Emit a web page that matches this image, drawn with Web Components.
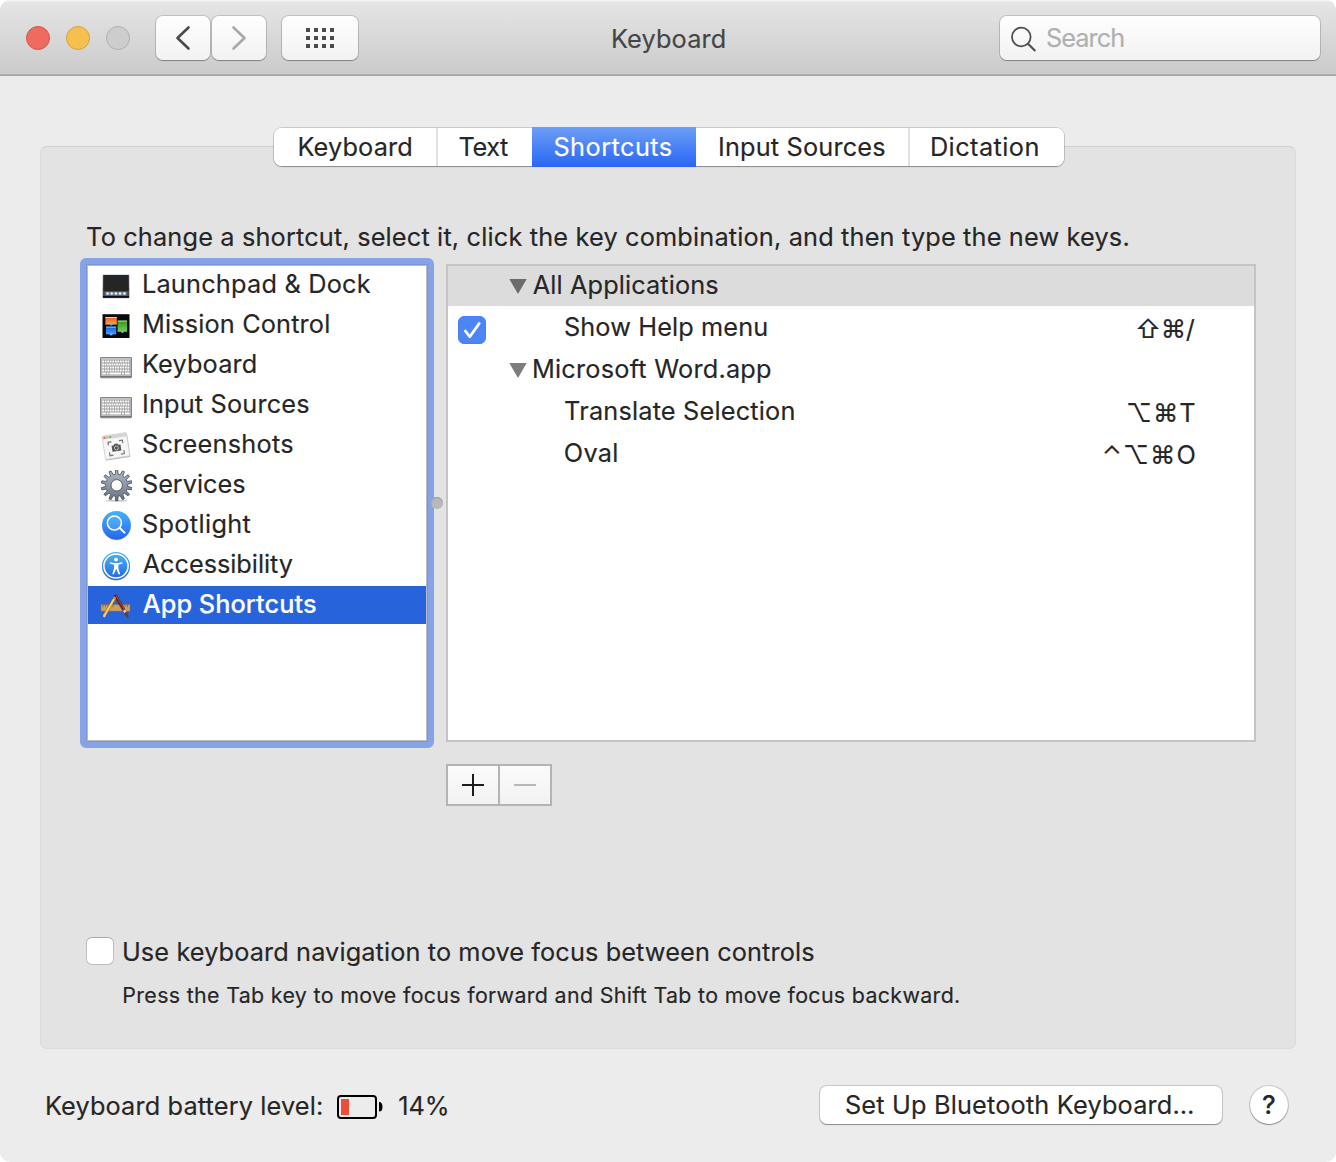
<!DOCTYPE html>
<html lang="en">
<head>
<meta charset="utf-8">
<title>Keyboard</title>
<style>
html{background:#fff}
body{margin:0;width:1336px;height:1162px;overflow:hidden;font-family:Inter,"Liberation Sans",sans-serif;color:#262626}
</style>
</head>
<body>
<pref-window></pref-window>
<script>
const define = (name, html, setup) => {
  const t = document.createElement('template');
  t.innerHTML = html;
  customElements.define(name, class extends HTMLElement {
    connectedCallback() {
      if (this.shadowRoot) return;
      this.attachShadow({mode: 'open'}).append(t.content.cloneNode(true));
      if (setup) setup(this, this.shadowRoot);
    }
  });
};

/* One line of text whose visible ink spans exactly `ink` pixels. */
const ctx = document.createElement('canvas').getContext('2d');
customElements.define('ui-label', class extends HTMLElement {
  connectedCallback() {
    if (this.shadowRoot) return;
    const size = this.getAttribute('size') || 25.3;
    const weight = this.getAttribute('weight') || 400;
    const ink = +this.getAttribute('ink');
    const root = this.attachShadow({mode: 'open'});
    root.innerHTML = `<style>:host{display:block;flex:none;width:${ink}px;height:30px;line-height:30px;font-size:${size}px;font-weight:${weight};white-space:pre}span{display:inline-block;font-kerning:normal;font-feature-settings:"calt" 0;-webkit-text-stroke:.15px currentColor}</style><span></span>`;
    const span = root.querySelector('span');
    const text = this.getAttribute('text');
    span.textContent = text;
    /* Measured at ten times the size, since glyph bounds are rounded to whole pixels. */
    ctx.font = `${weight} ${size * 10}px Inter, "Liberation Sans", sans-serif`;
    const m = ctx.measureText(text);
    const left = m.actualBoundingBoxLeft / 10, right = m.actualBoundingBoxRight / 10;
    const air = /^[BDIKLMPU⇧]/.test(text) ? 1.1 : .3;
    const gap = (ink - .6 - air - right - left) / ([...text].length - 1 || 1);
    span.style.letterSpacing = gap.toFixed(3) + 'px';
    span.style.marginLeft = (left + air).toFixed(2) + 'px';
  }
});

const gear = (() => {
  const n = 14, cx = 16.7, cy = 15.3; let d = '';
  for (let i = 0; i < n; i++) {
    const a = i * 2 * Math.PI / n - Math.PI / 2;
    [[-.13, 11], [-.07, 15.5], [.07, 15.5], [.13, 11]].forEach(([o, r], k) => {
      d += (i || k ? 'L' : 'M') + (cx + r * Math.cos(a + o)).toFixed(2) + ' ' + (cy + r * Math.sin(a + o)).toFixed(2);
    });
  }
  return d + 'ZM22.4 15.3a5.7 5.7 0 1 0-11.4 0a5.7 5.7 0 1 0 11.4 0Z';
})();
const keys = (() => {
  let s = '';
  [[10.5, 11, 2.1], [13.5, 12, 2.1], [16.5, 11, 2.1], [19.5, 11, 2.1]].forEach(([y, n, w], r) => {
    for (let i = 0; i < n; i++) s += `<rect x="${(2.2 + i * 27.8 / n).toFixed(2)}" y="${y}" width="${w - .3}" height="2" fill="#fff"/>`;
  });
  return s + '<path d="M2.2 22.6h3.6v2H2.2zM6.6 22.6h2v2h-2zM9.4 22.6h11.8v2H9.4zM22 22.6h2v2h-2zM24.8 22.6h5v2h-5z" fill="#fff"/>';
})();
const icons = {
  launchpad: `<defs><linearGradient id="a" x2="0" y2="1"><stop stop-color="#dbe7f1"/><stop offset="1" stop-color="#333"/></linearGradient></defs>
    <rect x="2.4" y="4" width="27.2" height="24.4" rx="1" fill="#000" opacity=".18"/><rect x="2.8" y="4.2" width="26.4" height="23.5" fill="url(#a)"/><rect x="3.2" y="5" width="25.6" height="16" fill="#252525"/><rect x="3.2" y="21" width="25.6" height="5.6" fill="#4b4f55"/><rect x="5.4" y="22" width="21.4" height="3.4" fill="#6d8096"/>
    <g fill="#eef4fb"><circle cx="7.5" cy="23.6" r="1.25"/><circle cx="11.7" cy="23.6" r="1.25"/><circle cx="15.9" cy="23.6" r="1.25"/><circle cx="20.1" cy="23.6" r="1.25"/><circle cx="24.4" cy="23.6" r="1.25"/></g><rect x="3" y="26.2" width="26" height="1.5" fill="#050505"/>`,
  mission: `<defs><linearGradient id="o" x2="0" y2="1"><stop stop-color="#f05a1a"/><stop offset="1" stop-color="#fba64c"/></linearGradient><linearGradient id="b" x2="0" y2="1"><stop stop-color="#1557d8"/><stop offset="1" stop-color="#42a5f8"/></linearGradient><linearGradient id="g" x2="0" y2="1"><stop stop-color="#2e9426"/><stop offset="1" stop-color="#72d344"/></linearGradient></defs>
    <rect x="2.5" y="4.2" width="27" height="23.8" fill="#080a0d"/><rect x="5.4" y="7" width="11.4" height="7.6" fill="url(#o)"/><rect x="5.4" y="7" width="11.4" height="1" fill="#f0cbb0"/><rect x="6" y="16.600" width="10.2" height="7.7" fill="url(#b)"/><rect x="6" y="16.600" width="10.2" height="1" fill="#a7c4ee"/><rect x="17.600" y="10.600" width="9.4" height="11.200" fill="url(#g)"/><rect x="17.600" y="10.600" width="9.4" height="1" fill="#b6d9ae"/><circle cx="11.200" cy="14.200" r="1.300" fill="#5db4ff"/><circle cx="11.200" cy="24.200" r="1.300" fill="#5db4ff"/><circle cx="22.400" cy="21.800" r="1.300" fill="#5db4ff"/>`,
  keyboard: `<rect x=".6" y="8" width="30.8" height="20.6" rx="1.4" fill="#000" opacity=".25"/><rect x="0" y="7" width="32" height="20.4" rx="1.2" fill="#858585"/><rect x="1" y="8" width="30" height="18.2" fill="#c2c2c2"/><rect x="1.6" y="10" width="28.8" height="15.2" fill="#9c9c9c"/>${keys}<rect x="0" y="26" width="32" height="1.5" rx=".7" fill="#777"/>`,
  screenshots: `<g transform="translate(2 6.2) rotate(-8.7)"><rect x=".2" y=".8" width="24.8" height="24" rx="1" fill="#000" opacity=".28"/><rect x="0" y="0" width="24.6" height="23.6" rx="1" fill="#f6f6f6" stroke="#c4c4c4" stroke-width=".6"/><rect x=".3" y=".3" width="24" height="3.4" fill="#d4d4d4"/><circle cx="2.2" cy="2" r="1.1" fill="#ef6058"/><circle cx="5.1" cy="2" r="1.1" fill="#eeb54a"/><circle cx="8" cy="2" r="1.1" fill="#58c050"/><path d="M5 10V7H8.5M16 7H19.5V10M19.5 17V20.5H16M8.5 20.5H5V17" fill="none" stroke="#777" stroke-width="1.2"/><path d="M8 11h2l1-1.5h3l1 1.5h2v6H8z" fill="#555"/><circle cx="12.5" cy="13.8" r="2" fill="#555" stroke="#d5d5d5" stroke-width=".8"/></g>`,
  services: `<defs><linearGradient id="s" x2="0" y2="1"><stop stop-color="#b2bac6"/><stop offset="1" stop-color="#687285"/></linearGradient></defs><ellipse cx="16.7" cy="30.7" rx="11" ry="1" fill="#000" opacity=".2"/><path d="${gear}" fill="url(#s)" stroke="#4b5362" stroke-width=".9" fill-rule="evenodd"/>`,
  spotlight: `<defs><linearGradient id="p" x2="0" y2="1"><stop stop-color="#45b5f8"/><stop offset="1" stop-color="#2465f0"/></linearGradient></defs><circle cx="16.5" cy="15.8" r="14.6" fill="#000" opacity=".15"/><circle cx="16.5" cy="15.3" r="14.4" fill="url(#p)"/><circle cx="14.4" cy="13" r="7" fill="#fff" fill-opacity=".12" stroke="#fff" stroke-width="1.5"/><path d="M19.5 17.8l5 4.8" stroke="#fff" stroke-width="2" stroke-linecap="round"/>`,
  accessibility: `<defs><linearGradient id="x" x2="0" y2="1"><stop stop-color="#4fb8f2"/><stop offset="1" stop-color="#1e65e0"/></linearGradient></defs><circle cx="16" cy="16.7" r="14" fill="#000" opacity=".3"/><circle cx="16" cy="16" r="14" fill="url(#x)"/><circle cx="16" cy="16" r="12.1" fill="none" stroke="#fff" stroke-width="1.5"/><circle cx="16" cy="9.6" r="1.9" fill="#fff"/><path d="M9.7 12.3l4.2.7h4.2l4.2-.7.2 1.3-4.2 1.2.2 4 1.6 5.2-1.5.5-2.3-5.4h-.2l-2.3 5.4-1.5-.5 1.6-5.2.2-4-4.2-1.2z" fill="#fff"/>`,
  app: `<rect x="1" y="14.7" width="29" height="6.4" fill="#cba068" stroke="#98703c" stroke-width=".5"/><path d="M3 14.700v2.500M5.500 14.700v2M8 14.700v2.500M10.500 14.700v2M13 14.700v2.500M20 14.700v2M22.500 14.700v2.500M25 14.700v2M27.500 14.700v2.500" stroke="#74501f" stroke-width=".7"/><path d="M13.900 5.800L16.300 4.700 26.300 21.500 24 22.800Z" fill="#c23e28" stroke="#4d1710" stroke-width=".6"/><path d="M14.800 5.500L24.800 22.200" stroke="#26221f" stroke-width=".9"/><path d="M23 20.800l2.300-1.500 1.400 2.400-2.500 1.500z" fill="#ccd0d4"/><path d="M24.200 23.200l2.500-1.500c1.500 1.500 2 4 1.800 6.500-2-.8-3.900-2.600-4.300-5z" fill="#5b4234"/><path d="M13 8.200l2.300 1.300L5.700 26l-2.500 2.300.2-3.700z" fill="#f7c63e" stroke="#8a5a16" stroke-width=".5"/><path d="M13.900 9L4.600 25.100" stroke="#ffe691" stroke-width=".7"/><path d="M13 8.200l1-1.800 2.200 1.300-.9 1.800z" fill="#e8857c"/><path d="M3.400 24.600l2.300 1.400-2.500 2.300z" fill="#f0dcb8"/><path d="M3.200 27l.9.600-1 .8z" fill="#222"/>`
};
define('ui-icon', `<style>:host{display:block;flex:none;width:32px;height:32px}svg{display:block}</style><svg width="32" height="32" viewBox="0 0 32 32"></svg>`,
  (h, r) => { r.querySelector('svg').innerHTML = icons[h.getAttribute('name')]; });

define('tool-button', `<style>:host{display:flex;align-items:center;justify-content:center;box-sizing:border-box;width:54px;height:44px;border-radius:7px;background:linear-gradient(#fefefe,#f2f2f2);box-shadow:0 0 0 1px rgba(0,0,0,.14),0 1px 1px rgba(0,0,0,.28)}::slotted(svg){display:block}</style><slot></slot>`);

define('window-toolbar', `<style>
:host{display:flex;align-items:center;box-sizing:border-box;height:76px;padding:0 16px 0 26px;background:linear-gradient(#f4f4f4 0,#f4f4f4 1px,#e5e5e5 2px,#cbcbcb 74px,#b0b0b0 74px,#a4a4a4 76px);border-radius:10px 10px 0 0}
.lights{display:flex;gap:16px;margin-right:26px}
i{width:24px;height:24px;border-radius:50%;box-sizing:border-box;border:1px solid}
.r{background:#ed6b60;border-color:#d95248}.y{background:#f5c04f;border-color:#d9a13b}.g{background:#cdcdcd;border-color:#b0b0b0}
.nav{display:flex;gap:2px;margin-right:16px}
tool-button.wide{width:76px;margin-right:254px}
ui-label{color:#454545;margin-top:2px}
.search{display:flex;align-items:center;box-sizing:border-box;width:320px;height:44px;margin-left:auto;padding-left:10px;border-radius:7px;background:linear-gradient(#fefefe,#f2f2f2);box-shadow:0 0 0 1px rgba(0,0,0,.14),0 1px 1px rgba(0,0,0,.28)}
.search ui-label{color:#b0b0b0;margin:0 0 0 9px}
</style>
<div class="lights"><i class="r"></i><i class="y"></i><i class="g"></i></div>
<div class="nav"><tool-button><svg width="20" height="28"><path d="M15.500 3.500L4.500 14l11 10.500" fill="none" stroke="#4a4a4a" stroke-width="2.600" stroke-linecap="round" stroke-linejoin="round"/></svg></tool-button><tool-button><svg width="20" height="28"><path d="M4.500 3.500L15.500 14l-11 10.500" fill="none" stroke="#a8a8a8" stroke-width="2.600" stroke-linecap="round" stroke-linejoin="round"/></svg></tool-button></div>
<tool-button class="wide"><svg width="28" height="20"><path d="M0 2h28M0 10h28M0 18h28" stroke="#4a4a4a" stroke-width="4" stroke-dasharray="4 4"/></svg></tool-button>
<ui-label text="Keyboard" ink="113"></ui-label>
<div class="search"><svg width="28" height="28" fill="none" stroke="#4f4f4f"><circle cx="11.300" cy="13" r="9.300" stroke-width="1.800"/><path d="M18 19.800l7.300 7.200" stroke-width="2.200"/></svg><ui-label text="Search" ink="77"></ui-label></div>`);

define('tab-segment', `<style>:host{display:flex;align-items:center;justify-content:center;box-sizing:border-box;height:38px;background:#fff}
:host([sep]){border-right:2px solid #e2e2e2}
:host([on]){color:#fff;height:40px;margin:-1px 0;background:linear-gradient(#6d9ff5,#2865f7)}</style><slot></slot>`);
define('tab-bar', `<style>:host{display:flex;align-items:center;width:790px;height:38px;background:#fff;border-radius:8px;box-shadow:0 0 0 1px rgba(0,0,0,.15),0 1px 1px rgba(0,0,0,.28)}
tab-segment:first-of-type{border-radius:8px 0 0 8px}tab-segment:last-of-type{border-radius:0 8px 8px 0}</style>
<tab-segment sep style="width:164px"><ui-label text="Keyboard" ink="113"></ui-label></tab-segment>
<tab-segment style="width:94px;padding-right:2px"><ui-label text="Text" ink="49"></ui-label></tab-segment>
<tab-segment on style="width:164px;padding-right:2px"><ui-label text="Shortcuts" ink="117"></ui-label></tab-segment>
<tab-segment sep style="width:214px"><ui-label text="Input Sources" ink="166"></ui-label></tab-segment>
<tab-segment style="width:154px;padding-right:5px"><ui-label text="Dictation" ink="107"></ui-label></tab-segment>`);

define('source-item', `<style>:host{display:flex;box-sizing:border-box;height:38px;padding:4px 0 0 12px}
:host([on]){background:#2763da;color:#fff}ui-label{margin:-1px 0 0 11px}</style>`,
  (h, r) => {
    const i = document.createElement('ui-icon'); i.setAttribute('name', h.getAttribute('icon'));
    const l = document.createElement('ui-label');
    l.setAttribute('text', h.getAttribute('label')); l.setAttribute('ink', h.getAttribute('ink'));
    if (h.hasAttribute('on')) l.setAttribute('weight', '500');
    r.append(i, l);
  });
define('source-list', `<style>:host{display:flex;flex-direction:column;gap:2px;box-sizing:border-box;width:354px;height:490px;margin:-6px;background:#fff;border:6px solid #87a3e7;border-radius:6px;box-shadow:inset 0 0 0 1px #7d96d2,inset 0 0 0 2px #b9bcc3;padding:2px}</style>
<source-item icon="launchpad" label="Launchpad &amp; Dock" ink="228"></source-item>
<source-item icon="mission" label="Mission Control" ink="186"></source-item>
<source-item icon="keyboard" label="Keyboard" ink="113"></source-item>
<source-item icon="keyboard" label="Input Sources" ink="166"></source-item>
<source-item icon="screenshots" label="Screenshots" ink="150"></source-item>
<source-item icon="services" label="Services" ink="102"></source-item>
<source-item icon="spotlight" label="Spotlight" ink="108"></source-item>
<source-item icon="accessibility" label="Accessibility" ink="150"></source-item>
<source-item on icon="app" label="App Shortcuts" ink="173"></source-item>`);

define('check-box', `<style>:host{display:block;flex:none;box-sizing:border-box;width:28px;height:28px;border-radius:6px;background:#fff;border:1px solid #bdbdbd;border-top-color:#a9a9a9}
:host([on]){background:#4c86f6;border-color:#4880ef}svg{display:none;margin:-1px}:host([on]) svg{display:block}</style>
<svg width="28" height="28"><path d="M7.300 15l4.500 5.700L21.200 7.500" fill="none" stroke="#fff" stroke-width="2.800" stroke-linecap="round" stroke-linejoin="round"/></svg>`);

define('shortcut-table', `<style>
:host{display:flex;flex-direction:column;gap:2px;box-sizing:border-box;width:810px;height:478px;background:#fff;border:2px solid #c4c4c4}
.row{display:flex;height:40px;align-items:center;padding:0 59px 0 61px}
.row.head{background:#dcdcdc}
.row.item{padding-left:117px}.row.checked{padding-left:10px}
.row check-box{margin:4px 79px 0 0}
ui-label{margin-top:-2px}.keys{margin:1px 0 0 auto}
svg{margin-right:6px}
</style>
<div class="row head"><svg width="18" height="15"><path d="M.3 0h17.400L9 15z" fill="#6c6c6c"/></svg><ui-label text="All Applications" ink="185"></ui-label></div>
<div class="row checked"><check-box on></check-box><ui-label text="Show Help menu" ink="202"></ui-label><ui-label class="keys" text="⇧⌘/" ink="59"></ui-label></div>
<div class="row"><svg width="18" height="15"><path d="M.3 0h17.400L9 15z" fill="#7d7d7d"/></svg><ui-label text="Microsoft Word.app" ink="238"></ui-label></div>
<div class="row item"><ui-label text="Translate Selection" ink="229"></ui-label><ui-label class="keys" text="⌥⌘T" ink="67"></ui-label></div>
<div class="row item"><ui-label text="Oval" ink="52"></ui-label><ui-label class="keys" text="⌃⌥⌘O" ink="91"></ui-label></div>`);

define('add-remove', `<style>:host{display:flex;box-sizing:border-box;width:106px;height:42px;border:2px solid #b4b4b4}
b{display:flex;align-items:center;justify-content:center;width:50px;background:linear-gradient(#fbfbfb,#f2f2f2)}b+b{border-left:2px solid #b4b4b4}</style>
<b><svg width="22" height="22"><path d="M11 0v22M0 11h22" stroke="#1c1c1c" stroke-width="2"/></svg></b><b><svg width="22" height="22"><path d="M0 11h22" stroke="#b8b8b8" stroke-width="2"/></svg></b>`);

define('push-button', `<style>:host{display:flex;align-items:center;justify-content:center;box-sizing:border-box;height:38px;border-radius:7px;background:#fff;box-shadow:0 0 0 1px rgba(0,0,0,.15),0 1px 1px rgba(0,0,0,.3)}</style><slot></slot>`);

define('pref-window', `<style>
:host{display:flex;flex-direction:column;width:1336px;height:1162px;background:#ececec;border-radius:10px}
main{display:flex;flex-direction:column;padding:52px 40px 0}
tab-bar{align-self:center;z-index:1;margin:0 0 -20px 2px}
.panel{display:flex;flex-direction:column;box-sizing:border-box;height:903px;padding:75px 39px 0 45px;border:1px solid #dadada;border-top-color:#d0d0d0;border-radius:7px;background:#e3e3e3}
.lists{display:flex;gap:18px;margin-top:12px;position:relative}
.dot{position:absolute;left:345px;top:233px;width:12px;height:12px;border-radius:50%;background:#b9b9b9;box-shadow:inset 0 1px 1px #999}
add-remove{margin:22px 0 0 360px}
.option{display:flex;gap:9px;margin-top:131px}
.hint{margin:13px 0 0 37px}
footer{display:flex;align-items:center;height:40px;margin:36px 48px 0 46px}
footer>ui-label{margin-top:2px}
.battery{margin:3px 16px 0 15px}
push-button.setup{width:402px;margin:0 28px 0 auto}
push-button.help{width:38px;border-radius:50%}
</style>
<window-toolbar></window-toolbar>
<main>
<tab-bar></tab-bar>
<div class="panel">
<ui-label text="To change a shortcut, select it, click the key combination, and then type the new keys." ink="1041.500" style="margin-left:1px"></ui-label>
<div class="lists"><source-list></source-list><shortcut-table></shortcut-table><div class="dot"></div></div>
<add-remove></add-remove>
<div class="option"><check-box></check-box><ui-label text="Use keyboard navigation to move focus between controls" ink="691"></ui-label></div>
<ui-label class="hint" size="21.400" text="Press the Tab key to move focus forward and Shift Tab to move focus backward." ink="836.500"></ui-label>
</div>
</main>
<footer>
<ui-label text="Keyboard battery level:" ink="276"></ui-label>
<svg class="battery" width="46" height="24"><rect x="1" y="1" width="38" height="22" rx="3" fill="none" stroke="#000" stroke-width="2"/><rect x="4" y="4" width="8" height="16" fill="#ec4d3c"/><path d="M42 7c2.500 0 3.500 2 3.500 5s-1 4.500-3.500 4.500z"/></svg>
<ui-label text="14%" ink="48.500"></ui-label>
<push-button class="setup"><ui-label text="Set Up Bluetooth Keyboard…" ink="347" style="margin-right:3px"></ui-label></push-button>
<push-button class="help"><ui-label text="?" ink="13" size="26" weight="500"></ui-label></push-button>
</footer>`);
</script>
</body>
</html>
